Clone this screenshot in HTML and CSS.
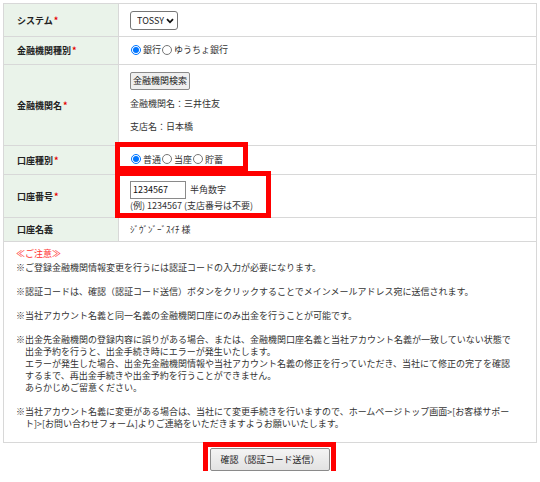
FILE: index.html
```html
<!DOCTYPE html>
<html>
<head>
<meta charset="UTF-8">
<title>金融機関情報変更</title>
<link rel="stylesheet" href="styles.css">
</head>
<body>
<div class="page">
	<table class="form_table">
		<tr class="row_system">
			<th>システム<span class="req">*</span></th>
			<td>
				<span class="sel_wrap">
					<select class="sel_system">
						<option>TOSSY</option>
					</select>
					<svg class="sel_arrow" width="8" height="6" viewBox="0 0 8 6"><path d="M1 1.2 L4 4.3 L7 1.2" fill="none" stroke="#111" stroke-width="1.8"/></svg>
				</span>
			</td>
		</tr>
		<tr class="row_kind">
			<th>金融機関種別<span class="req">*</span></th>
			<td>
				<label class="rd"><input type="radio" name="kind" checked>銀行</label><label class="rd"><input type="radio" name="kind">ゆうちょ銀行</label>
			</td>
		</tr>
		<tr class="row_bank">
			<th>金融機関名<span class="req">*</span></th>
			<td>
				<button class="btn_search">金融機関検索</button>
				<p class="bank_line">金融機関名：三井住友</p>
				<p class="bank_line">支店名：日本橋</p>
			</td>
		</tr>
		<tr class="row_type">
			<th>口座種別<span class="req">*</span></th>
			<td>
				<label class="rd"><input type="radio" name="type" checked>普通</label><label class="rd"><input type="radio" name="type">当座</label><label class="rd"><input type="radio" name="type">貯蓄</label>
			</td>
		</tr>
		<tr class="row_number">
			<th>口座番号<span class="req">*</span></th>
			<td>
				<div class="num_line"><input type="text" class="txt_number" value="1234567"> 半角数字</div>
				<div class="num_hint">(例) 1234567 (支店番号は不要)</div>
			</td>
		</tr>
		<tr class="row_name">
			<th>口座名義</th>
			<td>ｼﾞｳﾞﾝﾞｰﾞｽｲﾁ 様</td>
		</tr>
		<tr class="row_notes">
			<td colspan="2">
				<p class="caution">≪ご注意≫</p>
				<p class="note">※ご登録金融機関情報変更を行うには認証コードの入力が必要になります。</p>
				<p class="note gap">※認証コードは、確認（認証コード送信）ボタンをクリックすることでメインメールアドレス宛に送信されます。</p>
				<p class="note gap">※当社アカウント名義と同一名義の金融機関口座にのみ出金を行うことが可能です。</p>
				<p class="note gap">※出金先金融機関の登録内容に誤りがある場合、または、金融機関口座名義と当社アカウント名義が一致していない状態で<br>出金予約を行うと、出金手続き時にエラーが発生いたします。<br>エラーが発生した場合、出金先金融機関情報や当社アカウント名義の修正を行っていただき、当社にて修正の完了を確認<br>するまで、再出金手続きや出金予約を行うことができません。<br>あらかじめご留意ください。</p>
				<p class="note gap">※当社アカウント名義に変更がある場合は、当社にて変更手続きを行いますので、ホームページトップ画面&gt;[お客様サポー<br>ト]&gt;[お問い合わせフォーム]よりご連絡をいただきますようお願いいたします。</p>
			</td>
		</tr>
	</table>

	<div class="submit_area">
		<button class="btn_submit">確認（認証コード送信）</button>
	</div>

	<!-- 注釈の赤枠 -->
	<div class="mark mark_type"></div>
	<div class="mark mark_number"></div>
	<div class="mark mark_submit"></div>
</div>
</body>
</html>
```

FILE: styles.css
```css
body{
	margin:0;
	font-family:"Noto Sans CJK JP", "Noto Sans", sans-serif;
	font-size:9px;
	color:#333333;
	background-color:#ffffff;
}
.page{
	position:relative;
	padding:3px 3px 0 3px;
	width:534px;
}
.form_table{
	width:534px;
	border-collapse:collapse;
	border:1px solid #d2d2d2;
}
.form_table th, .form_table td{
	border:1px solid #d8d8d8;
	padding:0;
	vertical-align:middle;
	text-align:left;
}
.form_table th{
	width:101px;
	padding-left:13px;
	background-color:#eaf3ea;
	font-weight:bold;
	color:#222222;
}
.form_table td{
	padding-left:11px;
}
.req{
	color:#e60000;
	margin-left:1px;
}
.row_system{ height:33px; }
.row_kind{ height:28px; }
.row_bank{ height:81px; }
.row_type{ height:29px; }
.row_number{ height:43px; }
.row_name{ height:24px; }

.sel_wrap{
	position:relative;
	display:inline-block;
	vertical-align:middle;
}
.sel_system{
	-webkit-appearance:none;
	appearance:none;
	display:block;
	height:19px; width:48px;
	font-family:inherit; font-size:9px;
	color:#222222;
	border:1px solid #767676; border-radius:3px;
	background-color:#ffffff;
	padding:0 0 0 6px;
	margin:0;
}
.sel_arrow{
	position:absolute;
	right:4px; top:7px;
}
.rd{
	display:inline-flex;
	align-items:center;
}
.rd input{
	width:10px; height:10px;
	margin:0 2px 0 1px;
}
.row_bank td{
	padding-bottom:6px;
}
.btn_search{
	display:block;
	font-family:inherit; font-size:9px;
	color:#222222;
	height:18px;
	padding:0 2px;
	border:1px solid #8a8a8a; border-radius:2px;
	background-color:#efefef;
	margin:0;
}
.bank_line{
	margin:8px 0 0 0;
	line-height:12px;
}
.bank_line + .bank_line{
	margin-top:11px;
}
.num_line{
	display:flex;
	align-items:center;
	gap:4px;
}
.txt_number{
	width:50px; height:16px;
	padding:0 2px;
	font-family:inherit; font-size:9px;
	color:#111111;
	border:1px solid #8a8a8a;
	margin:0;
}
.num_hint{
	line-height:12px;
	margin-top:1px;
}
.row_notes td{
	padding:6px 0 12px 10px;
	height:auto;
}
.caution{
	margin:0;
	color:#ff3333;
	line-height:12px;
	padding-left:2px;
}
.note{
	margin:2px 0 0 0;
	line-height:12px;
	padding-left:11px;
	text-indent:-9px;
	white-space:nowrap;
}
.note.gap{
	margin-top:12px;
}
.submit_area{
	display:flex;
	justify-content:center;
	padding-top:5px;
}
.btn_submit{
	width:120px; height:23px;
	font-family:inherit; font-size:9px;
	color:#222222;
	border:1px solid #8a8a8a; border-radius:2px;
	background:linear-gradient(#f4f4f4, #e2e2e2);
	padding:0;
}
.mark{
	position:absolute;
	border:5px solid #ff0000;
	box-sizing:border-box;
}
.mark_type{
	left:115px; top:142px;
	width:133px; height:29px;
}
.mark_number{
	left:115px; top:171px;
	width:156px; height:47px;
}
.mark_submit{
	left:203px; top:442px;
	width:133px; height:35px;
}
```
